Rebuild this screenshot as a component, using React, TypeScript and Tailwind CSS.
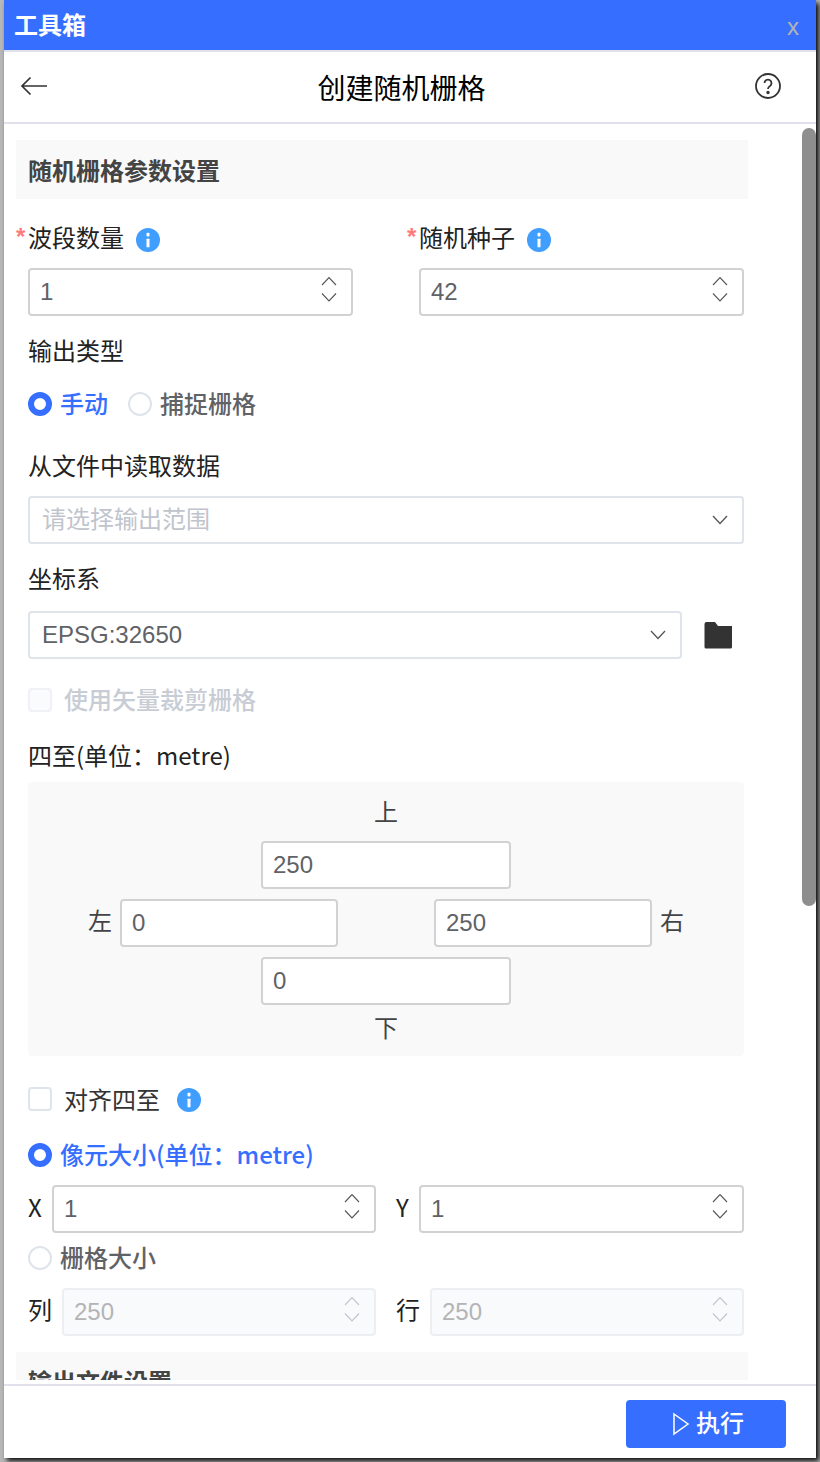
import React from "react";

const font = "font-['Noto_Sans_CJK_SC','Noto_Sans',sans-serif]";

function Info() {
  return (
    <span className="mt-[2px] flex h-6 w-6 items-center justify-center rounded-full bg-[#409eff]">
      <svg width="24" height="24" viewBox="0 0 24 24">
        <rect x="10.5" y="4.8" width="3" height="3.6" rx="0.8" fill="#fff" />
        <rect x="10.5" y="10.8" width="3" height="8.5" rx="0.4" fill="#fff" />
      </svg>
    </span>
  );
}

function Spin({ disabled }: { disabled?: boolean }) {
  const c = disabled ? "#c0c4cc" : "#555";
  return (
    <svg width="16" height="32" viewBox="0 0 16 32" fill="none" stroke={c} strokeWidth="1.1">
      <path d="M1 9 L8 1.5 L15 9" />
      <path d="M1 17.5 L8 25 L15 17.5" />
    </svg>
  );
}

function NumInput({ value, className, disabled }: { value: string; className: string; disabled?: boolean }) {
  return (
    <div
      className={`flex h-12 items-center justify-between rounded-[4px] border-2 pl-[10px] pr-[14px] text-[24px] font-['Liberation_Sans',sans-serif] ${
        disabled ? "border-[#edeef1] bg-[#f9fafc] text-[#b4b4b4]" : "border-[#d2d2d2] bg-white text-[#606266]"
      } ${className}`}
    >
      <span>{value}</span>
      <Spin disabled={disabled} />
    </div>
  );
}

function Plain({ value, className }: { value: string; className: string }) {
  return (
    <div className={`flex h-12 items-center rounded-[4px] border-2 border-[#d2d2d2] bg-white pl-[10px] text-[24px] text-[#606266] font-['Liberation_Sans',sans-serif] ${className}`}>
      {value}
    </div>
  );
}

function Chevron() {
  return (
    <svg width="16" height="10" viewBox="0 0 16 10" fill="none" stroke="#555" strokeWidth="1.3">
      <path d="M1 1 L8 8.5 L15 1" />
    </svg>
  );
}

function Select({ text, placeholder, className }: { text: string; placeholder?: boolean; className: string }) {
  return (
    <div className={`flex h-12 items-center justify-between rounded-[4px] border-2 border-[#dfe3ea] bg-white pl-[12px] pr-[14px] ${className}`}>
      <span className={placeholder ? "-mt-[4px] text-[24px] text-[#c0c4cc]" : "text-[24px] text-[#606266] font-['Liberation_Sans',sans-serif]"}>{text}</span>
      <Chevron />
    </div>
  );
}

function Radio({ on }: { on?: boolean }) {
  return on ? (
    <span className="box-border block h-6 w-6 rounded-full border-[6px] border-[#366fff] bg-white" />
  ) : (
    <span className="box-border block h-6 w-6 rounded-full border-2 border-[#dfe3ea] bg-white" />
  );
}

function Required({ label }: { label: string }) {
  return (
    <div className="flex h-[36px] items-center text-[24px] text-[#222]">
      <span className="-mt-[4px] w-[12px] font-['Liberation_Sans',sans-serif] font-bold text-[#ff7b7b]">*</span>
      <span className="-mt-[4px]">{label}</span>
      <span className="ml-[12px] flex"><Info /></span>
    </div>
  );
}

export default function App() {
  return (
    <div className={`h-[1462px] w-[820px] overflow-hidden bg-[#b8b8b8] ${font}`}>
      <div className="ml-1 flex h-[1458px] w-[812px] flex-col bg-white shadow-[3px_3px_5px_rgba(0,0,0,0.95)]">
        <div className="flex h-[50px] shrink-0 items-center justify-between bg-[#366fff] pl-[10px] pr-[17px]">
          <span className="-mt-[2px] text-[24px] font-bold text-white">工具箱</span>
          <span className="mt-[4px] text-[24px] leading-none text-[#b3b3b3] font-['Liberation_Sans',sans-serif]">x</span>
        </div>
        <div className="flex h-[74px] shrink-0 items-center justify-between border-y-2 border-[#e0e1ea] pb-[2px] pl-[16px] pr-[35px]">
          <svg width="28" height="20" viewBox="0 0 28 20" fill="none" stroke="#333" strokeWidth="1.7">
            <path d="M10.5 1.5 L2 10 L10.5 18.5 M2 10 H27" />
          </svg>
          <span className="mt-[2px] text-[28px] text-black">创建随机栅格</span>
          <svg width="26" height="26" viewBox="0 0 26 26" fill="none" stroke="#333" strokeWidth="1.8">
            <circle cx="13" cy="13" r="12" />
            <path d="M9.5 10 a3.5 3.5 0 1 1 5.5 3 c-1.4 .9 -2 1.5 -2 3" />
            <circle cx="13" cy="19.5" r="0.8" fill="#333" />
          </svg>
        </div>
        <div className="relative min-h-0 flex-1">
          <div className="absolute right-0 top-[4px] h-[778px] w-[14px] rounded-[7px] bg-[#8e8e8e]" />
          <div className="h-[1256px] overflow-hidden pl-[12px] pt-[16px]">
            <div className="flex h-[59px] w-[732px] items-center bg-[#f9f9f9] pl-[12px] text-[24px] font-bold text-[#444]">随机栅格参数设置</div>
            <div className="mt-[22px] flex w-[728px]">
              <div className="w-[391px]">
                <Required label="波段数量" />
              </div>
              <div>
                <Required label="随机种子" />
              </div>
            </div>
            <div className="mt-[11px] flex pl-[12px]">
              <NumInput value="1" className="w-[325px]" />
              <NumInput value="42" className="ml-[66px] w-[325px]" />
            </div>
            <div className="mt-[18px] pb-[4px] pl-[12px] text-[24px] leading-[32px] text-[#222]">输出类型</div>
            <div className="mt-[16px] flex h-[36px] items-center gap-[8px] pl-[12px] text-[24px] font-medium">
              <Radio on />
              <span className="-mt-[2px] text-[#366fff]">手动</span>
              <span className="ml-[12px]"><Radio /></span>
              <span className="-mt-[2px] text-[#606266]">捕捉栅格</span>
            </div>
            <div className="mt-[26px] pb-[2px] pl-[12px] text-[24px] leading-[34px] text-[#222]">从文件中读取数据</div>
            <div className="mt-[12px] pl-[12px]">
              <Select text="请选择输出范围" placeholder className="w-[716px]" />
            </div>
            <div className="mt-[17px] pb-[2px] pl-[12px] text-[24px] leading-[34px] text-[#222]">坐标系</div>
            <div className="mt-[14px] flex items-center pl-[12px]">
              <Select text="EPSG:32650" className="w-[654px]" />
              <svg className="ml-[22px]" width="28" height="28" viewBox="0 0 28 28" fill="#333">
                <path d="M0.5 3 Q0.5 1 2.5 1 H11 L14 5 H28 V26 Q28 27.5 26.5 27.5 H2 Q0.5 27.5 0.5 26 Z" />
              </svg>
            </div>
            <div className="mt-[23px] flex h-[36px] items-center pl-[12px] text-[24px] font-medium text-[#c8ccd4]">
              <span className="h-6 w-6 rounded-[4px] border-2 border-[#f0f1f5] bg-[#fafbfd]" />
              <span className="-mt-[2px] ml-[12px]">使用矢量裁剪栅格</span>
            </div>
            <div className="mt-[21px] pb-[4px] pl-[12px] text-[24px] leading-[32px] text-[#222]">四至(单位：metre)</div>
            <div className="ml-[12px] mt-[7px] flex h-[274px] w-[716px] flex-col items-center rounded-[4px] bg-[#f9f9f9] pt-[11px] text-[24px] text-[#444]">
              <div className="leading-[36px]">上</div>
              <Plain value="250" className="mt-[12px] w-[250px]" />
              <div className="mt-[10px] flex items-center">
                <span className="-mt-[6px] mr-[8px]">左</span>
                <Plain value="0" className="w-[218px]" />
                <Plain value="250" className="ml-[96px] w-[218px]" />
                <span className="-mt-[6px] ml-[8px]">右</span>
              </div>
              <Plain value="0" className="mt-[10px] w-[250px]" />
              <div className="mt-[4px] leading-[36px]">下</div>
            </div>
            <div className="mt-[25px] flex h-[36px] items-center pl-[12px] text-[24px] text-[#333]">
              <span className="h-6 w-6 rounded-[4px] border-2 border-[#dfe3ea] bg-white" />
              <span className="ml-[12px]">对齐四至</span>
              <span className="ml-[17px] flex"><Info /></span>
            </div>
            <div className="mt-[20px] flex h-[36px] items-center gap-[8px] pl-[12px] text-[24px] font-medium text-[#366fff]">
              <Radio on />
              <span className="-mt-[2px]">像元大小(单位：metre)</span>
            </div>
            <div className="mt-[12px] flex items-center pl-[12px] text-[24px] text-[#222]">
              <span className="-mt-[4px] w-[24px]">X</span>
              <NumInput value="1" className="w-[324px]" />
              <span className="-mt-[4px] ml-[20px] w-[23px]">Y</span>
              <NumInput value="1" className="w-[325px]" />
            </div>
            <div className="mt-[7px] flex h-[36px] items-center gap-[8px] pl-[12px] text-[24px] font-medium text-[#606266]">
              <Radio />
              <span className="-mt-[2px]">栅格大小</span>
            </div>
            <div className="mt-[12px] flex items-center pl-[12px] text-[24px] text-[#222]">
              <span className="-mt-[6px] w-[34px]">列</span>
              <NumInput disabled value="250" className="w-[314px]" />
              <span className="-mt-[6px] ml-[20px] w-[34px]">行</span>
              <NumInput disabled value="250" className="w-[314px]" />
            </div>
            <div className="mt-[16px] h-[59px] w-[732px] bg-[#f9f9f9] pl-[12px] pt-[11px] text-[24px] font-bold text-[#444]">
              输出文件设置
            </div>
          </div>
        </div>
        <div className="flex h-[74px] shrink-0 items-start justify-end border-t-2 border-[#e0e1ea] pr-[30px] pt-[14px]">
          <button className="flex h-[48px] w-[160px] items-center justify-center gap-[6px] rounded-[4px] bg-[#366fff] pl-[4px] text-[24px] font-medium text-white">
            <svg width="18" height="24" viewBox="0 0 18 24" fill="none" stroke="#fff" strokeWidth="1.5">
              <path d="M2 2 L16 12 L2 22 Z" />
            </svg>
            <span className="-mt-[4px]">执行</span>
          </button>
        </div>
      </div>
    </div>
  );
}
